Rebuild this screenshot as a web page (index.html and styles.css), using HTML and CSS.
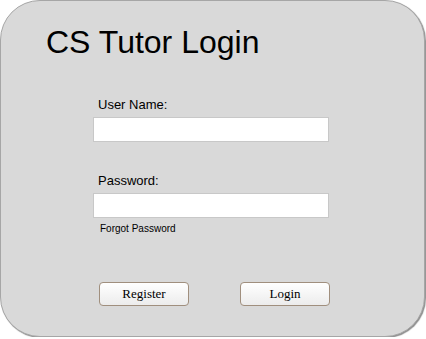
FILE: index.html
```html
<!DOCTYPE html>
<html lang="en">

<head>
    <meta charset="UTF-8">
    <meta name="viewport" content="width=device-width, initial-scale=1.0">
    <title>CS Tutor Login</title>
    <link rel="stylesheet" href="styles.css">
</head>

<body>
    <div class="login-box">
        <h1>CS Tutor Login</h1>

        <form class="login-form">
            <label class="field-label" for="username">User Name:</label>
            <input class="field-input" type="text" id="username">

            <label class="field-label password-label" for="password">Password:</label>
            <input class="field-input" type="password" id="password">
            <a class="forgot-link" href="#forgot">Forgot Password</a>

            <div class="button-row">
                <button type="button" class="btn">Register</button>
                <button type="submit" class="btn">Login</button>
            </div>
        </form>
    </div>
</body>

</html>
```

FILE: styles.css
```css
body {
    font-family: "Liberation Sans", Arial, sans-serif;
    background-color: #ffffff;
    margin: 0;
}

.login-box {
    box-sizing: border-box;
    width: 425px;
    height: 337px;
    background-color: #d9d9d9;
    border: 1px solid #a6a6a6;
    border-radius: 40px;
    box-shadow: 1px 1px 1px #8c8c8c;
}

h1 {
    margin: 23px 0 0 45px;
    font-size: 32px;
    font-weight: normal;
    line-height: 37px;
    color: #000;
}

.login-form {
    display: flex;
    flex-direction: column;
    align-items: flex-start;
    margin: 36px 0 0 92px;
}

.field-label {
    font-size: 13px;
    line-height: 15px;
    padding-left: 5px;
    color: #000;
}

.password-label {
    margin-top: 31px;
}

.field-input {
    box-sizing: border-box;
    width: 236px;
    height: 25px;
    margin: 5px 0 0 0;
    border: 1px solid #c8c8c8;
    background-color: #fff;
    padding: 0 4px;
}

.forgot-link {
    margin-top: 5px;
    padding-left: 7px;
    font-size: 10px;
    line-height: 12px;
    color: #000;
    text-decoration: none;
}

.button-row {
    display: flex;
    gap: 51px;
    margin: 47px 0 0 6px;
}

.btn {
    box-sizing: border-box;
    width: 90px;
    height: 24px;
    font-family: "Liberation Serif", "Times New Roman", serif;
    font-size: 13px;
    color: #000;
    border: 1px solid #a08f7e;
    border-radius: 4px;
    background: linear-gradient(#ffffff, #ececec);
    cursor: pointer;
}
```
